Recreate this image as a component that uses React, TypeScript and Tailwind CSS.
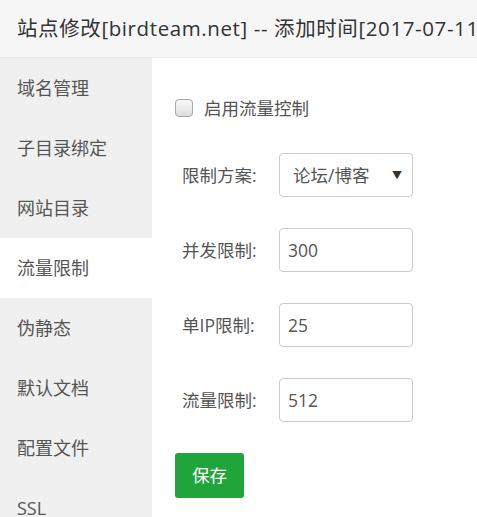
import React from "react";

const MENU = ["域名管理", "子目录绑定", "网站目录", "流量限制", "伪静态", "默认文档", "配置文件", "SSL"];

const ROWS = [
  { label: "并发限制:", value: "300" },
  { label: "单IP限制:", value: "25" },
  { label: "流量限制:", value: "512" },
];

const FONT = { fontFamily: '"Open Sans", "Noto Sans CJK SC", sans-serif' };

function Label({ text }: { text: string }) {
  return <span className="w-[104px] shrink-0 pl-[7px] text-[17.5px] text-[#555]">{text}</span>;
}

export default function App() {
  return (
    <div className="w-[477px] h-[517px] overflow-hidden bg-white flex flex-col" style={FONT}>
      {/* Title */}
      <div className="h-[58px] shrink-0 bg-[#f6f6f6] border-b border-[#e9e9e9] flex items-center pl-[17px] overflow-hidden">
        <span className="whitespace-nowrap text-[20.5px] tracking-[0.6px] text-[#333]">站点修改[birdteam.net] -- 添加时间[2017-07-11]</span>
      </div>

      <div className="flex flex-1 min-h-0">
        {/* Side menu */}
        <div className="w-[152px] shrink-0 bg-[#f0f0f0] flex flex-col">
          {MENU.map((m) => (
            <div key={m}
              className={`h-[60px] shrink-0 flex items-center pl-[17px] text-[18px] text-[#555] ${m === "流量限制" ? "bg-white" : ""}`}>
              {m}
            </div>
          ))}
        </div>

        {/* Form */}
        <div className="flex-1 pl-[23px] pt-[40px] flex flex-col">
          <label className="flex items-center gap-[11px] h-[20px]">
            <span className="w-[18px] h-[18px] rounded-[4px] border border-[#a9a9a9] bg-gradient-to-b from-[#fafafa] to-[#dcdcdc]" />
            <span className="text-[17.5px] text-[#555]">启用流量控制</span>
          </label>

          <div className="flex items-center mt-[35px] h-[44px]">
            <Label text="限制方案:" />
            <div className="w-[134px] h-[44px] border border-[#ccc] rounded-[4px] flex items-center pl-[13px] pr-[10px]">
              <span className="flex-1 text-[17.5px] text-[#555]">论坛/博客</span>
              <span className="text-[10px] text-[#333]">▼</span>
            </div>
          </div>

          {ROWS.map((r) => (
            <div key={r.label} className="flex items-center mt-[31px] h-[44px]">
              <Label text={r.label} />
              <div className="w-[134px] h-[44px] border border-[#ccc] rounded-[4px] flex items-center pl-[8px]">
                <span className="text-[17.5px] text-[#555]">{r.value}</span>
              </div>
            </div>
          ))}

          <button className="mt-[31px] w-[69px] h-[45px] rounded-[3px] bg-[#20a53a] text-white text-[17.5px] flex items-center justify-center">
            保存
          </button>
        </div>
      </div>
    </div>
  );
}
